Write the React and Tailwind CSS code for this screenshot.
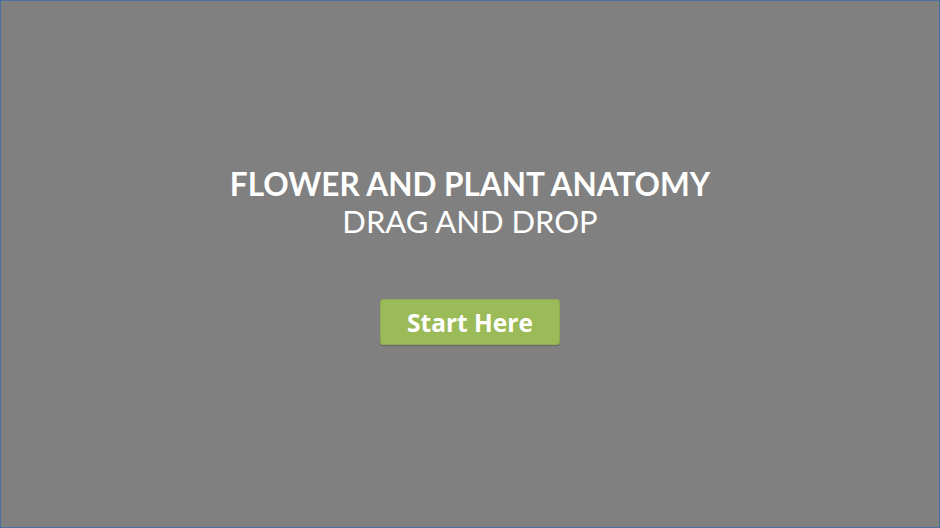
import React from 'react';

export default function App() {
  return (
    <div className="w-[940px] h-[528px] bg-[#808080] border border-[#4f6fa0] flex flex-col items-center pt-[165px] font-['Lato','Open_Sans',sans-serif]">
      <h1 className="text-white text-[31.5px] leading-[37px] font-bold">
        FLOWER AND PLANT ANATOMY
      </h1>
      <h2 className="text-white text-[31px] leading-[37px] font-normal">
        DRAG AND DROP
      </h2>
      <button className="mt-[59px] w-[180px] h-[46px] pt-[2px] rounded-[3px] bg-[#9bbb59] border border-[#8eab52] text-white text-[24.5px] font-bold font-['Open_Sans',sans-serif] shadow-[0_1px_1px_rgba(0,0,0,0.2)]">
        Start Here
      </button>
    </div>
  );
}
